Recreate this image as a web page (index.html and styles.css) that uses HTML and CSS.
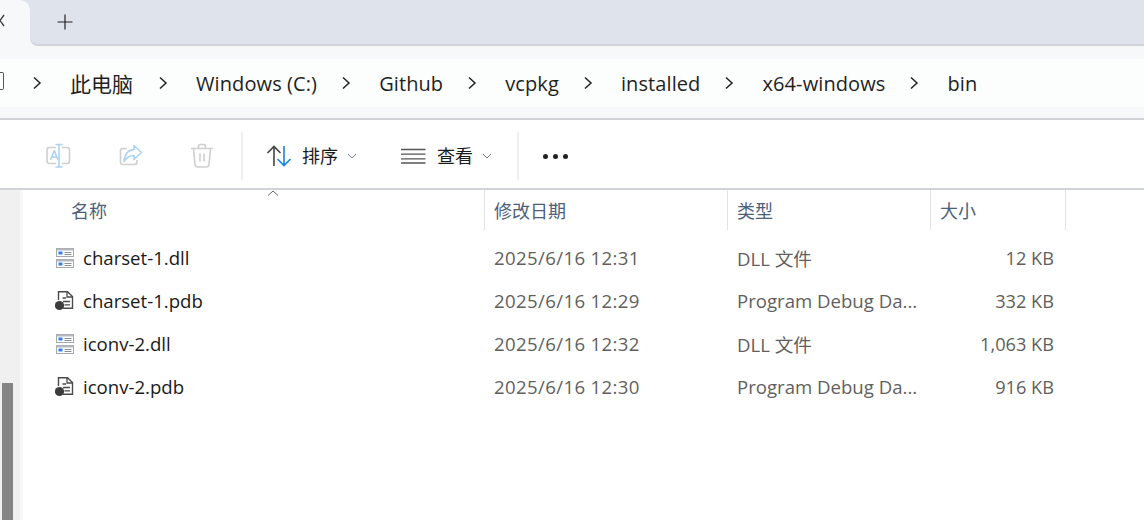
FILE: index.html
```html
<!DOCTYPE html>
<html lang="zh-CN">
<head>
<meta charset="utf-8">
<title>bin</title>
<link rel="stylesheet" href="styles.css">
</head>
<body>
<div class="tabbar">
  <div class="tab"><svg class="tab-x" width="10" height="16" viewBox="0 0 10 16"><path d="M-4 2L4 13M4 2L-4 13" fill="none" stroke="#333" stroke-width="1.3"/></svg></div>
  <div class="tabstrip">
    <svg class="plus" width="16" height="16" viewBox="0 0 16 16"><path d="M8 .5V15.500M.5 8H15.500" fill="none" stroke="#222" stroke-width="1.2"/></svg>
  </div>
</div>
<div class="addressband">
  <nav class="crumbs">
    <span class="home-stub"></span>
    <svg class="chev" viewBox="0 0 10 14"><path d="M2 1.500L8 7L2 12.500" /></svg><span class="crumb crumb-cjk">此电脑</span>
    <svg class="chev" viewBox="0 0 10 14"><path d="M2 1.500L8 7L2 12.500" /></svg><span class="crumb">Windows (C:)</span>
    <svg class="chev" viewBox="0 0 10 14"><path d="M2 1.500L8 7L2 12.500" /></svg><span class="crumb">Github</span>
    <svg class="chev" viewBox="0 0 10 14"><path d="M2 1.500L8 7L2 12.500" /></svg><span class="crumb">vcpkg</span>
    <svg class="chev" viewBox="0 0 10 14"><path d="M2 1.500L8 7L2 12.500" /></svg><span class="crumb">installed</span>
    <svg class="chev" viewBox="0 0 10 14"><path d="M2 1.500L8 7L2 12.500" /></svg><span class="crumb">x64-windows</span>
    <svg class="chev" viewBox="0 0 10 14"><path d="M2 1.500L8 7L2 12.500" /></svg><span class="crumb">bin</span>
  </nav>
</div>
<div class="toolbar">
  <svg class="tool rename" width="26" height="26" viewBox="0 0 26 26" fill="none">
    <path d="M11 4.500H4.500Q2 4.500 2 7V18Q2 20.500 4.500 20.500H11M17 4.500H22Q24.500 4.500 24.500 7V18Q24.500 20.500 22 20.500H17" stroke="#cfcfcf" stroke-width="1.600"/>
    <path d="M14 1.500V24M10.500 1.500H17.500M10.500 24H17.500" stroke="#a9d3f5" stroke-width="1.500"/>
    <path d="M5.500 17L9 8H9.500L13 17M6.800 14H11.800" stroke="#a9d3f5" stroke-width="1.500"/>
  </svg>
  <svg class="tool share" width="26" height="26" viewBox="0 0 26 26" fill="none">
    <path d="M9 5.500H5Q2.500 5.500 2.500 8V19Q2.500 21.500 5 21.500H16.500Q19 21.500 19 19V17" stroke="#cfcfcf" stroke-width="1.600"/>
    <path d="M16 2.500L23.500 9.500L16 16.500V12.500Q9.500 12.500 6 18.500Q7 7 16 6.500Z" stroke="#a9d3f5" stroke-width="1.500" stroke-linejoin="round"/>
  </svg>
  <svg class="tool trash" width="24" height="26" viewBox="0 0 24 26" fill="none" stroke="#cfcfcf" stroke-width="1.600">
    <path d="M1 5.500H23M8.500 5V3.500Q8.500 1.500 10.500 1.500H13.500Q15.500 1.500 15.500 3.500V5M3.500 6L5 21.500Q5.300 24 8 24H16Q18.700 24 19 21.500L20.500 6M10 10.500V18.500M14 10.500V18.500"/>
  </svg>
  <span class="sep"></span>
  <div class="action sort">
    <svg width="26" height="24" viewBox="0 0 26 24" fill="none" stroke-width="1.600">
      <path d="M8 22V3M1.500 9L8 2.500L14.500 9" stroke="#444"/>
      <path d="M18 2V21M11.500 15L18 21.500L24.500 15" stroke="#1a86d9"/>
    </svg>
    <span class="action-label">排序</span>
    <svg class="caret" viewBox="0 0 10 6"><path d="M1 1L5 5L9 1"/></svg>
  </div>
  <div class="action view">
    <svg width="25" height="16" viewBox="0 0 25 16" fill="none" stroke="#555" stroke-width="1.300">
      <path d="M0 1.500H24.500M0 6.200H24.500M0 10.800H24.500M0 15H24.500"/>
    </svg>
    <span class="action-label">查看</span>
    <svg class="caret" viewBox="0 0 10 6"><path d="M1 1L5 5L9 1"/></svg>
  </div>
  <span class="sep sep2"></span>
  <div class="more"><i></i><i></i><i></i></div>
</div>
<div class="body">
  <aside class="rail"><div class="thumb"></div></aside>
  <main class="pane">
    <div class="header">
      <div class="h h-name">名称<svg class="sort-up" viewBox="0 0 12 6"><path d="M1 5.500L6 1L11 5.500"/></svg></div>
      <div class="h h-date">修改日期</div>
      <div class="h h-type">类型</div>
      <div class="h h-size">大小</div>
    </div>
    <div class="rows">
      <div class="row">
        <div class="c-name"><svg class="icon" width="20" height="20" viewBox="0 0 20 20"><use href="#dll"/></svg>charset-1.dll</div>
        <div class="c-date">2025/6/16 12:31</div><div class="c-type">DLL 文件</div><div class="c-size">12 KB</div>
      </div>
      <div class="row">
        <div class="c-name"><svg class="icon" width="20" height="20" viewBox="0 0 20 20"><use href="#pdb"/></svg>charset-1.pdb</div>
        <div class="c-date">2025/6/16 12:29</div><div class="c-type">Program Debug Da...</div><div class="c-size">332 KB</div>
      </div>
      <div class="row">
        <div class="c-name"><svg class="icon" width="20" height="20" viewBox="0 0 20 20"><use href="#dll"/></svg>iconv-2.dll</div>
        <div class="c-date">2025/6/16 12:32</div><div class="c-type">DLL 文件</div><div class="c-size">1,063 KB</div>
      </div>
      <div class="row">
        <div class="c-name"><svg class="icon" width="20" height="20" viewBox="0 0 20 20"><use href="#pdb"/></svg>iconv-2.pdb</div>
        <div class="c-date">2025/6/16 12:30</div><div class="c-type">Program Debug Da...</div><div class="c-size">916 KB</div>
      </div>
    </div>
  </main>
</div>
<svg class="defs" width="0" height="0">
  <symbol id="dll" viewBox="0 0 20 20">
    <rect x="1.500" y="0.500" width="17" height="8" fill="#fff" stroke="#a4a9af"/>
    <rect x="1.500" y="0.500" width="17" height="2" fill="#b4b8bd"/>
    <rect x="3.500" y="3.500" width="4" height="3" fill="#2f80ed"/>
    <path d="M9.500 4.500H16.500M9.500 6.500H16.500" stroke="#8a8f96"/>
    <rect x="1.500" y="11.500" width="17" height="8" fill="#fff" stroke="#a4a9af"/>
    <rect x="1.500" y="11.500" width="17" height="2" fill="#b4b8bd"/>
    <rect x="3.500" y="14.500" width="4" height="3" fill="#2f80ed"/>
    <path d="M9.500 15.500H16.500M9.500 17.500H16.500" stroke="#8a8f96"/>
  </symbol>
  <symbol id="pdb" viewBox="0 0 20 20">
    <path d="M3.500 9V.7H12.500L17.500 5.500V17.300H8" fill="#fff" stroke="#4a4a4a" stroke-width="1.400"/>
    <path d="M12 .7V6H17.500M7.500 7H11M8 10.500H15M9.500 13.800H15" fill="none" stroke="#4a4a4a" stroke-width="1.300"/>
    <circle cx="4.500" cy="14.500" r="4.600" fill="#3c3c3c"/>
  </symbol>
</svg>
</body>
</html>
```
FILE: styles.css
```css
* { box-sizing: border-box; }
html, body { margin: 0; height: 100%; }
body {
  width: 1144px;
  height: 520px;
  overflow: hidden;
  background: #fff;
  color: #1a1a1a;
  font-family: "Open Sans", "Noto Sans", "Noto Sans CJK SC", sans-serif;
  display: flex;
  flex-direction: column;
}
.defs { display: block; height: 0; }

.tabbar {
  height: 46px;
  flex: none;
  background: linear-gradient(#dfe3eb 50%, #f6f8fa 50%);
  display: flex;
  position: relative;
}
.tab {
  width: 30px;
  height: 46px;
  background: #f6f8fa;
  border-radius: 0 10px 0 0;
  display: flex;
  align-items: center;
  flex: none;
}
.tab-x { margin-top: -2px; margin-bottom: 2px; }
.tabstrip {
  flex: 1;
  height: 46px;
  background: #dfe3eb;
  border-bottom: 2px solid #cfd3da;
  border-radius: 0 0 0 8px;
  display: flex;
  align-items: center;
  padding-left: 27px;
}
.plus { margin-top: -1px; }

.addressband {
  height: 74px;
  flex: none;
  padding: 13px 0 11px;
  background: #f6f8fa;
  border-bottom: 2px solid #d0d3d8;
}
.crumbs {
  height: 48px;
  background: #fcfdfd;
  display: flex;
  align-items: center;
  font-size: 20px;
  letter-spacing: .1px;
  color: #1f1f1f;
}
.home-stub {
  width: 4px;
  height: 18px;
  border: 1.500px solid #555;
  border-left: 0;
  border-radius: 0 2px 2px 0;
  margin-right: 28px;
  margin-bottom: 4px;
}
.chev { width: 10px; height: 14px; flex: none; }
.chev path { fill: none; stroke: #222; stroke-width: 1.500; }
.crumb { margin: 0 24px 0 28px; white-space: nowrap; }
.crumb-cjk { font-size: 21px; margin-right: 25px; letter-spacing: 0; }

.toolbar {
  height: 70px;
  flex: none;
  border-bottom: 2px solid #d0d3d8;
  display: flex;
  align-items: center;
  background: #fff;
  padding-top: 4px;
}
.tool { flex: none; }
.rename { margin-left: 45px; }
.share { margin-left: 47px; }
.trash { margin-left: 46px; }
.sep {
  width: 2px;
  height: 48px;
  background: #eeeeee;
  margin-left: 27px;
}
.action { display: flex; align-items: center; flex: none; }
.sort { margin-left: 23px; }
.sort .action-label { margin-left: 10px; }
.view { margin-left: 44px; }
.action-label { font-size: 18px; margin: 0 0 2px 11px; color: #1a1a1a; }
.caret { width: 10px; height: 6px; margin-left: 9px; }
.caret path { fill: none; stroke: #777; stroke-width: 1; }
.sep2 { margin-left: 25px; }
.more { display: flex; gap: 5px; margin-left: 24px; }
.more i { width: 5px; height: 5px; border-radius: 50%; background: #222; display: block; }

.body { flex: 1; display: flex; min-height: 0; }
.rail {
  width: 23px;
  flex: none;
  background: #f0f0f0;
  border-right: 3px solid #f8f8f8;
  position: relative;
}
.thumb {
  position: absolute;
  left: 2px;
  top: 193px;
  bottom: 0;
  width: 11px;
  background: #858585;
}
.pane { flex: 1; min-width: 0; }
.header { display: flex; height: 40px; font-size: 18px; color: #4c607a; }
.h { height: 40px; padding: 0 0 1px 9px; display: flex; align-items: center; border-right: 1px solid #e3e3e3; flex: none; position: relative; }
.h-name { width: 462px; padding-left: 48px; }
.h-date { width: 243px; }
.h-type { width: 203px; padding-left: 9px; }
.h-size { width: 135px; }
.sort-up {
  position: absolute;
  left: 244px;
  top: 0;
  width: 12px;
  height: 6px;
}
.sort-up path { fill: none; stroke: #666; stroke-width: 1; }

.rows { padding-top: 6px; }
.row { display: flex; height: 43px; align-items: center; font-size: 18.600px; color: #5f5f5f; white-space: nowrap; }
.c-name { width: 462px; padding-left: 32px; display: flex; align-items: center; color: #1a1a1a; gap: 8px; flex: none; }
.c-date { width: 243px; padding-left: 9px; flex: none; letter-spacing: .37px; }
.c-type { width: 203px; padding-left: 9px; flex: none; }
.c-size { width: 123px; text-align: right; flex: none; font-size: 18.200px; }
.icon { flex: none; }
```
